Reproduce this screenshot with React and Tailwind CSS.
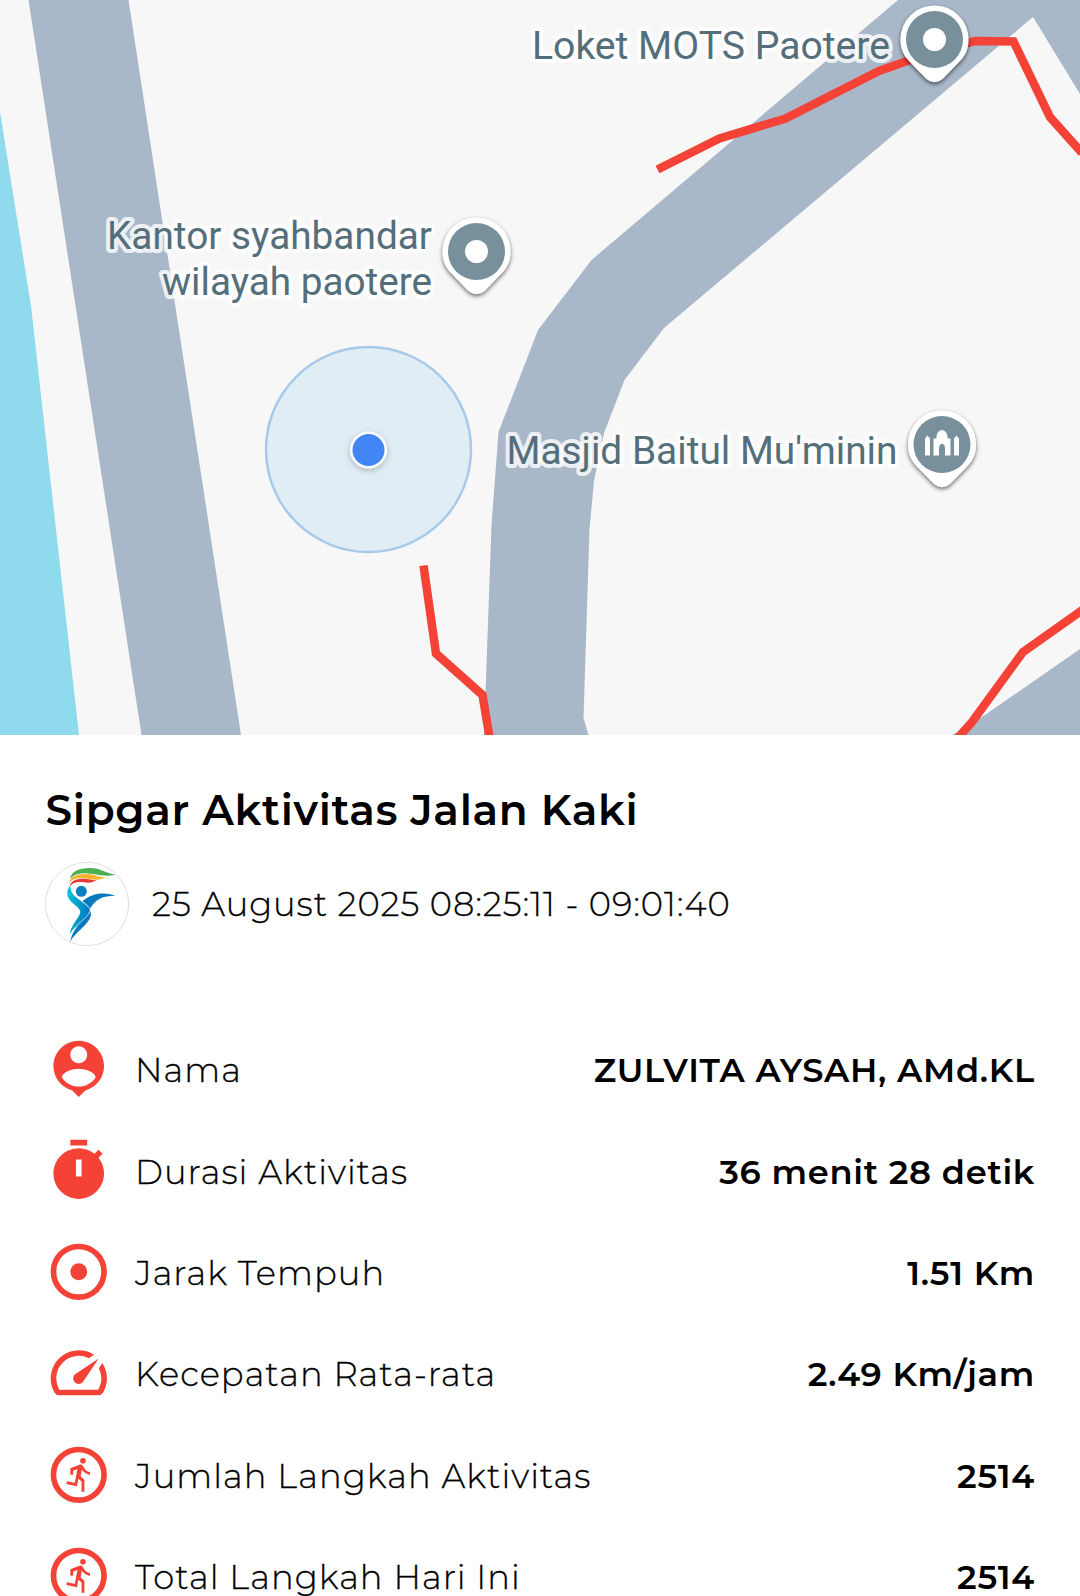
import React from "react";

const PersonIcon = () => (
  <path d="M12 2C7.03 2 3 6.03 3 11c0 4.17 2.84 7.67 6.69 8.69L12 22l2.31-2.31C18.16 18.67 21 15.17 21 11c0-4.97-4.03-9-9-9zm0 2c1.66 0 3 1.34 3 3s-1.34 3-3 3-3-1.34-3-3 1.34-3 3-3zm0 14.3c-2.5 0-4.71-1.28-6-3.22.03-1.99 4-3.08 6-3.08 1.99 0 5.97 1.09 6 3.08-1.29 1.94-3.5 3.22-6 3.22z" />
);

const TimerIcon = () => (
  <path
    fillRule="evenodd"
    d="M15 1H9v2h6V1zm-4 13h2V8h-2v6zm8.03-6.61l1.42-1.42c-.43-.51-.9-.99-1.41-1.41l-1.42 1.42C16.07 4.74 14.12 4 12 4c-4.97 0-9 4.03-9 9s4.02 9 9 9 9-4.03 9-9c0-2.12-.74-4.07-1.97-5.61z"
  />
);

const DistanceIcon = () => (
  <>
    <circle cx="12" cy="12" r="9" fill="none" stroke="currentColor" strokeWidth="2" />
    <circle cx="12" cy="12" r="3" />
  </>
);

const SpeedIcon = () => (
  <>
    <path d="M20.38 8.57l-1.23 1.85a8 8 0 0 1-.22 7.58H5.07A8 8 0 0 1 15.58 6.85l1.85-1.23A10 10 0 0 0 3.35 19a2 2 0 0 0 1.72 1h13.85a2 2 0 0 0 1.74-1 10 10 0 0 0-.27-10.44z" />
    <path d="M10.59 15.41a2 2 0 0 0 2.83 0l5.66-8.49-8.49 5.66a2 2 0 0 0 0 2.83z" />
  </>
);

const RunIcon = () => (
  <>
    <circle cx="12" cy="12" r="9" fill="none" stroke="currentColor" strokeWidth="2" />
    <circle cx="13.5" cy="7" r="1" />
    <path d="M16 12c-.7 0-2.01-.54-2.91-1.76l-.41 2.35 1.32 1.16V18h-1v-3.58l-1.11-1-.52 2.64-3.77-.77.2-.98 2.78.57.96-4.89-1.54.57V12H9V9.65l3.28-1.21c.49-.18 1.03.06 1.26.53C14.37 10.67 15.59 11 16 11v1z" />
  </>
);

const rows = [
  { icon: PersonIcon, label: "Nama", value: "ZULVITA AYSAH, AMd.KL" },
  { icon: TimerIcon, label: "Durasi Aktivitas", value: "36 menit 28 detik" },
  { icon: DistanceIcon, label: "Jarak Tempuh", value: "1.51 Km" },
  { icon: SpeedIcon, label: "Kecepatan Rata-rata", value: "2.49 Km/jam" },
  { icon: RunIcon, label: "Jumlah Langkah Aktivitas", value: "2514" },
  { icon: RunIcon, label: "Total Langkah Hari Ini", value: "2514" },
];

const Pin = ({ x, y, children }) => (
  <g transform={`translate(${x} ${y})`}>
    <path
      d="M0 -34A34 34 0 0 1 34 0C34 9 31 16 25 22L8 39.500Q0 46 -8 39.500L-25 22C-31 16 -34 9 -34 0A34 34 0 0 1 0 -34Z"
      fill="#fff"
      filter="url(#pinShadow)"
    />
    <circle r="28.500" fill="#78909c" />
    {children}
  </g>
);

const MapLabel = ({ x, y, width, children }) => (
  <text
    x={x}
    y={y}
    textLength={width}
    lengthAdjust="spacingAndGlyphs"
    className="font-['Roboto',sans-serif] text-[39px]"
    fill="#546e7a"
    stroke="#fff"
    strokeOpacity="0.8"
    strokeWidth="8"
    strokeLinejoin="round"
    paintOrder="stroke"
  >
    {children}
  </text>
);

const ActivityMap = () => (
  <svg viewBox="0 0 1080 735" className="block h-[735px] w-[1080px] shrink-0 bg-[#f7f7f7]">
    <defs>
      <filter id="pinShadow" x="-30%" y="-30%" width="160%" height="160%">
        <feDropShadow dx="0" dy="2" stdDeviation="2.200" floodColor="#000" floodOpacity="0.6" />
      </filter>
      <filter id="dotShadow" x="-50%" y="-50%" width="200%" height="200%">
        <feDropShadow dx="0" dy="2" stdDeviation="3" floodColor="#000" floodOpacity="0.25" />
      </filter>
    </defs>

    {/* water and roads */}
    <path d="M0 112L31 306L79 735H0Z" fill="#90daee" />
    <g fill="#a9b8c9">
      <path d="M28.500 0H128.500L241 735H141.500Z" />
      <path d="M898 0H1080V94L1033 17L664 328L624.500 380L604 433L594 481L589.500 529L583.500 718L588.500 735H484L491.500 525L498.500 432L538 330L591.500 260Z" />
      <path d="M1080 649L985 715L952 735H1080Z" />
    </g>

    {/* recorded track */}
    <g fill="none" stroke="#f44336" strokeWidth="8.500">
      <path d="M657.500 169.500L719.500 138.500L785.500 118.500L879 71L910 60L975 41L1013.500 41.500L1050 117L1082 153" />
      <path d="M423.500 565.500L436 653.500L482.500 695L490 740" />
      <path d="M1084 609L1023 652L972 722L956 740" />
    </g>

    <circle cx="368.500" cy="449.500" r="102.500" fill="#e1edf5" stroke="#a7caea" strokeWidth="2.500" />
    <circle cx="368.500" cy="450" r="18.500" fill="#fff" filter="url(#dotShadow)" />
    <circle cx="368.500" cy="450" r="16" fill="#4285f4" />

    <MapLabel x="532" y="59" width="358">Loket MOTS Paotere</MapLabel>
    <MapLabel x="107" y="248.500" width="325">Kantor syahbandar</MapLabel>
    <MapLabel x="162" y="294.500" width="270">wilayah paotere</MapLabel>
    <MapLabel x="506.500" y="464" width="391">Masjid Baitul Mu'minin</MapLabel>

    <Pin x="934.500" y="39.500">
      <circle r="11.500" fill="#fff" />
    </Pin>
    <Pin x="476.500" y="251.500">
      <circle r="11.500" fill="#fff" />
    </Pin>
    <Pin x="942" y="444.500">
      <path
        d="M-17 11V-6L-14.500 -9L-12 -6V11ZM12 11V-6L14.500 -9L17 -6V11ZM-8.500 11V-6H-5.500C-6 -11 -3 -14 0 -14.500C3 -14 6 -11 5.500 -6H8.500V11H3V4Q3 0 0 -1Q-3 0 -3 4V11Z"
        fill="#fff"
      />
    </Pin>
  </svg>
);

const Logo = () => (
  <svg viewBox="0 0 252 252" className="size-[84px] shrink-0">
    <defs>
      <linearGradient id="body" x1="0" y1="0" x2="1" y2="0.4">
        <stop offset="0" stopColor="#00c8dc" />
        <stop offset="1" stopColor="#0678bd" />
      </linearGradient>
    </defs>
    <circle cx="126" cy="126" r="125" fill="#fff" stroke="#cfcfcf" strokeWidth="2" />
    <path d="M75 50C80 26 106 18 136 18C165 18 182 34 212 38C188 44 166 40 142 36C112 31 90 35 75 50Z" fill="#4caf50" />
    <path d="M73 62C76 42 101 34 128 36C151 38 160 46 184 46C165 56 148 53 128 50C102 46 86 48 73 62Z" fill="#f5b32f" />
    <path d="M75 73C77 54 99 49 122 51C136 52 142 55 156 55C142 63 130 63 116 61C96 58 86 60 75 73Z" fill="#e53935" />
    <circle cx="109" cy="88" r="16.500" fill="#0a80c2" />
    <path d="M76 71C63 84 65 103 76 116C89 130 105 137 106 150C103 169 75 191 75 218C88 191 137 174 135 142C124 123 94 112 82 94C77 86 77 78 76 71Z" fill="url(#body)" />
    <path d="M211 101C175 88 139 94 112 118C124 127 139 141 138 160C130 192 83 216 76 240C79 219 88 203 106 184C121 169 137 157 135 140C151 111 173 101 211 101Z" fill="#0879bc" />
    <path d="M110 118C123 128 139 137 135 148C127 170 85 190 76 218" fill="none" stroke="#fff" strokeWidth="2" />
  </svg>
);

const ActivityRow = ({ icon: Icon, label, value }) => (
  <div className="flex h-[101.3px] shrink-0 items-center">
    <svg viewBox="0 0 24 24" fill="currentColor" className="size-[67.5px] shrink-0 text-[#f44336]">
      <Icon />
    </svg>
    <span className="ml-[22.5px] pt-[3px] text-[33.75px] font-light tracking-[1.06px] [-webkit-text-stroke:0.3px_black]">
      {label}
    </span>
    <span className="ml-auto pt-[3px] text-[33.75px] font-semibold tracking-[0.7px]">{value}</span>
  </div>
);

const App = () => {
  return (
    <div className="flex h-[1596px] w-[1080px] flex-col overflow-hidden bg-white font-['Montserrat','Inter',sans-serif] text-black">
      <ActivityMap />
      <div className="flex flex-col px-[45px] pt-[44px]">
        <h1 className="pl-[0.5px] text-[42.2px] leading-[62px] font-semibold tracking-[0.7px]">
          Sipgar Aktivitas Jalan Kaki
        </h1>
        <div className="mt-[21px] flex items-center">
          <Logo />
          <span className="ml-[23px] pt-px text-[33.75px] font-light tracking-[0.92px] [-webkit-text-stroke:0.3px_black]">
            25 August 2025 08:25:11 - 09:01:40
          </span>
        </div>
        <div className="mt-[72.5px] flex flex-col">
          {rows.map((row) => (
            <ActivityRow key={row.label} {...row} />
          ))}
        </div>
      </div>
    </div>
  );
};

export default App;
